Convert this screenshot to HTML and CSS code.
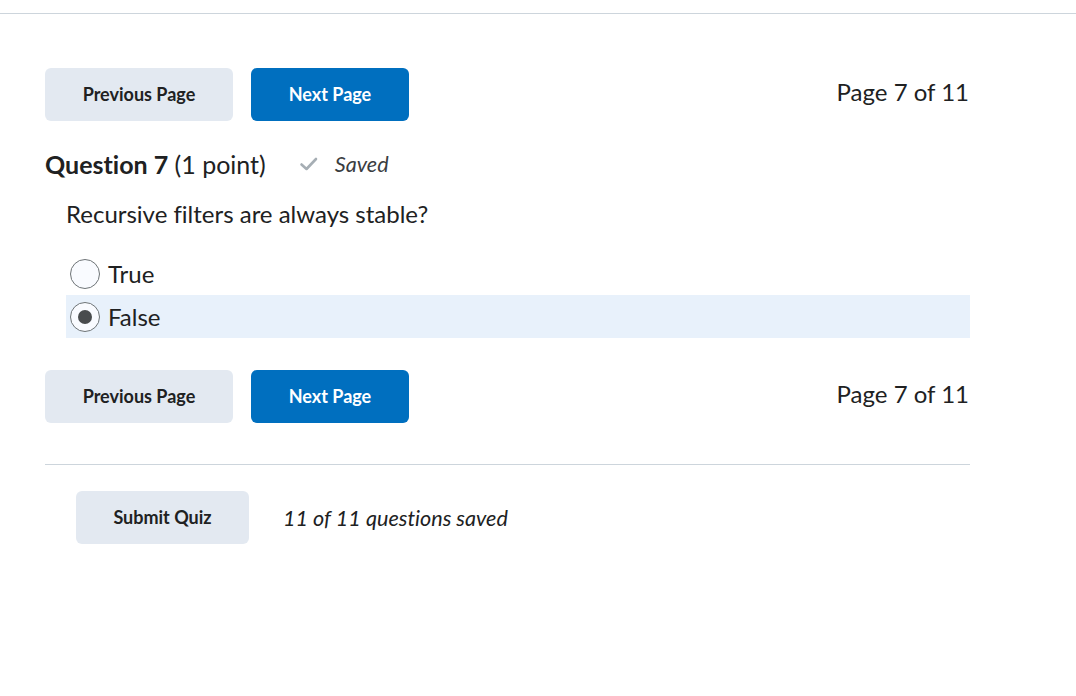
FILE: index.html
```html
<!DOCTYPE html>
<html>
<head>
<meta charset="utf-8">
<link rel="stylesheet" href="styles.css">
</head>
<body>
<div class="topbar"></div>
<main class="quiz">
  <div class="nav-row">
    <div class="nav-buttons">
      <button class="btn btn-secondary btn-prev">Previous Page</button>
      <button class="btn btn-primary btn-next">Next Page</button>
    </div>
    <div class="page-count">Page 7 of 11</div>
  </div>

  <div class="question-head">
    <h2 class="q-title"><strong>Question 7</strong> <span class="q-points">(1 point)</span></h2>
    <div class="saved">
      <svg class="check" width="20" height="16" viewBox="0 0 20 16"><path d="M2.5 8.5 L7.5 13 L17 3" fill="none" stroke="#a6aeb4" stroke-width="2.6" stroke-linecap="round" stroke-linejoin="round"/></svg>
      <span class="saved-text">Saved</span>
    </div>
  </div>

  <p class="q-text">Recursive filters are always stable?</p>

  <div class="options">
    <label class="option">
      <span class="radio"></span>
      <span class="opt-label">True</span>
    </label>
    <label class="option option-selected">
      <span class="radio radio-checked"><span class="dot"></span></span>
      <span class="opt-label">False</span>
    </label>
  </div>

  <div class="nav-row nav-row-bottom">
    <div class="nav-buttons">
      <button class="btn btn-secondary btn-prev">Previous Page</button>
      <button class="btn btn-primary btn-next">Next Page</button>
    </div>
    <div class="page-count">Page 7 of 11</div>
  </div>

  <hr class="divider">

  <div class="submit-row">
    <button class="btn btn-secondary btn-submit">Submit Quiz</button>
    <span class="saved-count">11 of 11 questions saved</span>
  </div>
</main>
</body>
</html>
```

FILE: styles.css
```css
* { box-sizing: border-box; }
html, body { margin: 0; padding: 0; background: #ffffff; }
body {
  font-family: Lato, "Noto Sans", sans-serif;
  color: #202122;
  font-variant-ligatures: none;
}
.topbar {
  height: 14px;
  border-bottom: 1px solid #cdd5dc;
}
.quiz {
  width: 925px;
  margin-left: 45px;
}
.nav-row {
  display: flex;
  justify-content: space-between;
  align-items: center;
  margin-top: 54px;
  height: 53px;
}
.nav-row-bottom { margin-top: 32px; }
.nav-buttons { display: flex; gap: 18px; }
.btn {
  font-family: Lato, "Noto Sans", sans-serif;
  font-variant-ligatures: none;
  font-weight: 700;
  font-size: 18px;
  border: none;
  border-radius: 6px;
  height: 53px;
  padding: 0 0 2px 0;
  cursor: pointer;
}
.btn-secondary { background: #e3e9f1; color: #202122; }
.btn-primary { background: #006fbf; color: #ffffff; }
.btn-prev { width: 188px; }
.btn-next { width: 158px; }
.page-count {
  font-size: 24px;
  color: #202122;
  padding-right: 1px;
  margin-top: -7px;
}
.question-head {
  display: flex;
  align-items: center;
  margin-top: 28px;
  height: 30px;
}
.q-title {
  margin: 0;
  font-size: 25px;
  font-weight: 400;
  line-height: 30px;
}
.q-title strong { font-weight: 700; }
.saved {
  display: flex;
  align-items: center;
  margin-left: 33px;
  gap: 16px;
  color: #3a3d3f;
}
.saved-text { font-style: italic; font-size: 21.6px; }
.q-text {
  margin: 20px 0 0 21px;
  font-size: 24px;
  line-height: 30px;
}
.options {
  margin: 23px 0 0 21px;
  display: flex;
  flex-direction: column;
}
.option {
  display: flex;
  align-items: center;
  height: 43px;
  padding-left: 4px;
  gap: 8px;
  font-size: 24px;
}
.option-selected { background: #e8f1fb; }
.radio {
  width: 30px;
  height: 30px;
  border-radius: 50%;
  border: 1.5px solid #6e7477;
  background: #f9fbff;
  display: flex;
  align-items: center;
  justify-content: center;
  flex-shrink: 0;
}
.dot {
  width: 14px;
  height: 14px;
  border-radius: 50%;
  background: #494c4e;
}
.divider {
  border: none;
  border-top: 1px solid #cdd5dc;
  margin: 41px 0 0 0;
}
.submit-row {
  display: flex;
  align-items: center;
  margin: 26px 0 0 31px;
  gap: 34px;
}
.btn-submit { width: 173px; }
.saved-count { font-style: italic; font-size: 21.6px; color: #202122; }
```
